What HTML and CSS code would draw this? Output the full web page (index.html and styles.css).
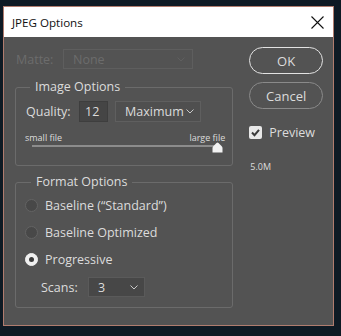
FILE: index.html
```html
<!DOCTYPE html>
<html>
<head>
<meta charset="utf-8">
<link rel="stylesheet" href="styles.css">
</head>
<body>
<div class="dialog">
  <div class="titlebar">
    <span class="title">JPEG Options</span>
    <svg class="close" width="13" height="13" viewBox="0 0 13 13"><path d="M0.5 0.5 L12.5 12.5 M12.5 0.5 L0.5 12.5" stroke="#111" stroke-width="1.1" fill="none"/></svg>
  </div>
  <div class="content">
    <div class="left">
      <div class="matte-row">
        <span class="matte-label">Matte:</span>
        <div class="select disabled matte-select"><span>None</span>
          <svg class="chev" width="8" height="5" viewBox="0 0 8 5"><path d="M0.5 0.5 L4 4 L7.5 0.5" stroke="#5f5f5f" fill="none"/></svg>
        </div>
      </div>
      <fieldset class="group image-group">
        <legend>Image Options</legend>
        <div class="quality-row">
          <span class="label">Quality:</span>
          <div class="num-input">12</div>
          <div class="select quality-select"><span>Maximum</span>
            <svg class="chev" width="8" height="5" viewBox="0 0 8 5"><path d="M0.5 0.5 L4 4 L7.5 0.5" stroke="#c8c8c8" fill="none"/></svg>
          </div>
        </div>
        <div class="size-labels"><span>small file</span><span>large file</span></div>
        <div class="slider">
          <div class="track"></div>
          <svg class="thumb" width="11" height="11" viewBox="0 0 11 11"><path d="M0.5 10.5 L0.5 6 Q0.5 5 1.5 4 L4.5 1 Q5.5 0 6.5 1 L9.5 4 Q10.5 5 10.5 6 L10.5 10.5 Z" fill="#f2f2f2"/></svg>
        </div>
      </fieldset>
      <fieldset class="group format-group">
        <legend>Format Options</legend>
        <div class="radio-row first"><span class="radio"></span><span>Baseline (“Standard”)</span></div>
        <div class="radio-row"><span class="radio"></span><span>Baseline Optimized</span></div>
        <div class="radio-row"><span class="radio checked"></span><span>Progressive</span></div>
        <div class="scans-row">
          <span class="label">Scans:</span>
          <div class="select scans-select"><span>3</span>
            <svg class="chev" width="8" height="5" viewBox="0 0 8 5"><path d="M0.5 0.5 L4 4 L7.5 0.5" stroke="#c8c8c8" fill="none"/></svg>
          </div>
        </div>
      </fieldset>
    </div>
    <div class="right">
      <div class="btn primary">OK</div>
      <div class="btn">Cancel</div>
      <div class="check-row">
        <span class="checkbox"><svg width="13" height="13" viewBox="0 0 13 13"><path d="M3 6.5 L5.5 9.2 L10 3.8" stroke="#3a3a3a" stroke-width="2" fill="none"/></svg></span>
        <span>Preview</span>
      </div>
      <div class="size">5.0M</div>
    </div>
  </div>
</div>
</body>
</html>
```
FILE: styles.css
```css
html, body {
  margin: 0;
  padding: 0;
  background: #0e1a24;
}
body {
  width: 341px;
  height: 336px;
  overflow: hidden;
  font-family: "Open Sans", "Noto Sans", sans-serif;
  font-size: 12.5px;
  color: #dcdcdc;
}
.dialog {
  margin: 6px 0 0 3px;
  width: 329px;
  height: 318px;
  border: 1px solid #b07c6e;
  background: #535353;
  display: flex;
  flex-direction: column;
}
.titlebar {
  height: 30px;
  background: #ffffff;
  display: flex;
  align-items: center;
  justify-content: space-between;
  padding: 0 9px 0 8px;
  color: #111;
  font-size: 11.6px;
}
.title { padding-top: 1px; }
.close { display: block; }
.content {
  display: flex;
  padding: 12px 10px 0 11px;
}
.left {
  width: 219px;
  display: flex;
  flex-direction: column;
}
.matte-row {
  display: flex;
  align-items: center;
  height: 20px;
  padding-left: 1px;
}
.matte-label {
  color: #6c6c6c;
  width: 47px;
}
.select {
  box-sizing: border-box;
  display: flex;
  align-items: center;
  justify-content: space-between;
  border: 1px solid #5f5f5f;
  background: #4f4f4f;
}
.select.disabled {
  border-color: #5e5e5e;
  background: #535353;
  color: #6c6c6c;
}
.matte-select {
  width: 130px;
  height: 20px;
  padding: 0 7px 0 9px;
}
.chev { display: block; }
.group {
  margin: 0;
  padding: 0;
  border: 1px solid #6b6b6b;
  border-radius: 3px;
  min-width: 0;
}
.group legend {
  padding: 0 5px;
  font-size: 12.5px;
  line-height: 18px;
}
.image-group {
  margin-top: 9px;
  height: 88px;
  box-sizing: border-box;
  padding: 0 9px 0 10px;
}
.image-group legend { margin-left: 4px; }
.quality-row {
  display: flex;
  align-items: center;
  margin-top: 5px;
  height: 21px;
}
.quality-row .label { width: 53px; }
.num-input {
  box-sizing: border-box;
  width: 29px;
  height: 21px;
  background: #454545;
  border: 1px solid #3e3e3e;
  padding-left: 5px;
  line-height: 19px;
}
.quality-select {
  margin-left: 7px;
  width: 86px;
  height: 21px;
  padding: 0 6px 0 9px;
}
.size-labels {
  display: flex;
  justify-content: space-between;
  font-size: 9px;
  margin-top: 10px;
  line-height: 12px;
  margin-left: -1px;
  margin-right: -2px;
}
.slider {
  position: relative;
  height: 10px;
  margin: 1px 5px 0 6px;
}
.track {
  height: 2px;
  background: #8c8c8c;
  margin-top: 1px;
}
.thumb {
  position: absolute;
  right: -5px;
  top: -3px;
}
.format-group {
  margin-top: 7px;
  height: 135px;
  box-sizing: border-box;
  padding: 0 9px;
}
.format-group legend { margin-left: 6px; }
.radio-row {
  display: flex;
  align-items: center;
  height: 20px;
  margin-top: 7px;
}
.radio-row.first { margin-top: 4px; }
.radio {
  box-sizing: border-box;
  width: 13px;
  height: 13px;
  border-radius: 50%;
  background: #484848;
  border: 1px solid #636363;
  margin-right: 7px;
  position: relative;
}
.radio.checked {
  background: #f0f0f0;
  border-color: #f0f0f0;
}
.radio.checked::after {
  content: "";
  position: absolute;
  left: 3px;
  top: 3px;
  width: 5px;
  height: 5px;
  border-radius: 50%;
  background: #3a3a3a;
}
.scans-row {
  display: flex;
  align-items: center;
  margin-top: 8px;
  padding-left: 16px;
  height: 20px;
}
.scans-row .label { width: 47px; }
.scans-select {
  width: 57px;
  height: 20px;
  padding: 0 6px 0 9px;
  background: #474747;
  border-color: #5a5a5a;
}
.right {
  margin-left: 16px;
  width: 74px;
  display: flex;
  flex-direction: column;
}
.btn {
  box-sizing: border-box;
  height: 27px;
  border: 1px solid #8a8a8a;
  border-radius: 14px;
  display: flex;
  align-items: center;
  justify-content: center;
  font-size: 13px;
  margin-top: 8px;
}
.btn.primary {
  margin-top: -2px;
  border: 1.5px solid #e2e2e2;
}
.check-row {
  display: flex;
  align-items: center;
  margin-top: 16px;
  height: 14px;
  font-size: 12.5px;
}
.checkbox {
  width: 13px;
  height: 13px;
  background: #e8e8e8;
  border-radius: 2px;
  margin-right: 7px;
}
.checkbox svg { display: block; }
.size {
  font-size: 9px;
  margin-top: 21px;
  padding-left: 1px;
}
```
